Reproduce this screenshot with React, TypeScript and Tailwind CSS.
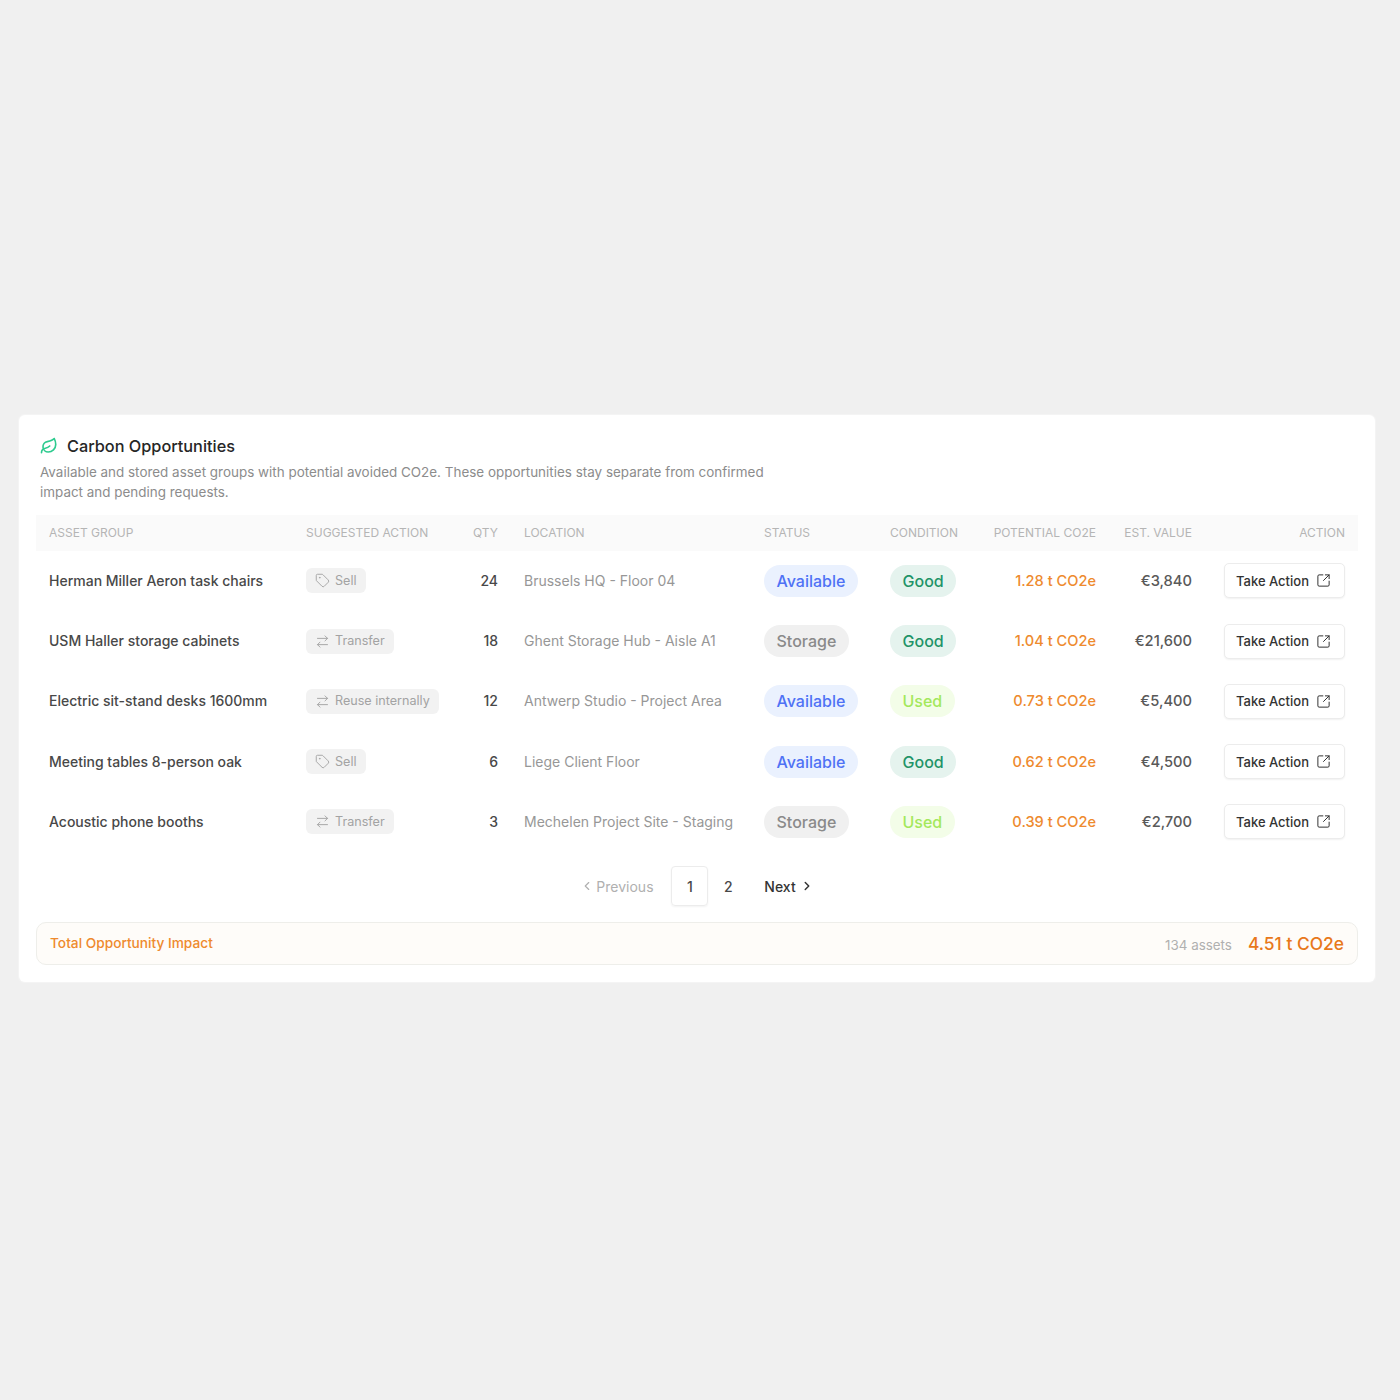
import { ArrowRightLeft, ChevronLeft, ChevronRight, Leaf, SquareArrowOutUpRight, Tag } from "lucide-react";

type Row = {
  name: string;
  action: "Sell" | "Transfer" | "Reuse internally";
  qty: number;
  location: string;
  status: "Available" | "Storage";
  condition: "Good" | "Used";
  co2: string;
  value: string;
};

const rows: Row[] = [
  { name: "Herman Miller Aeron task chairs", action: "Sell", qty: 24, location: "Brussels HQ - Floor 04", status: "Available", condition: "Good", co2: "1.28 t CO2e", value: "€3,840" },
  { name: "USM Haller storage cabinets", action: "Transfer", qty: 18, location: "Ghent Storage Hub - Aisle A1", status: "Storage", condition: "Good", co2: "1.04 t CO2e", value: "€21,600" },
  { name: "Electric sit-stand desks 1600mm", action: "Reuse internally", qty: 12, location: "Antwerp Studio - Project Area", status: "Available", condition: "Used", co2: "0.73 t CO2e", value: "€5,400" },
  { name: "Meeting tables 8-person oak", action: "Sell", qty: 6, location: "Liege Client Floor", status: "Available", condition: "Good", co2: "0.62 t CO2e", value: "€4,500" },
  { name: "Acoustic phone booths", action: "Transfer", qty: 3, location: "Mechelen Project Site - Staging", status: "Storage", condition: "Used", co2: "0.39 t CO2e", value: "€2,700" },
];

const statusStyle = {
  Available: "bg-[#eaf1fe] text-[#4f72f5]",
  Storage: "bg-[#f0f0f0] text-[#8a8a8a]",
};

const conditionStyle = {
  Good: "bg-[#e5f3ee] text-[#1f9468]",
  Used: "bg-[#f3fde8] text-[#a3e85c]",
};

const gridCols = "grid grid-cols-[257px_156px_36px_266px_126px_90px_116px_96px_153px] items-center px-[13px]";

export default function App() {
  return (
    <div className="h-[1400px] bg-[#f0f0f0] pt-[415px] pl-[19px] pr-[25px] font-['Inter',sans-serif]">
      <div className="h-[567px] rounded-[6px] bg-white px-[17px] pt-[19px] shadow-[0_0_0_1px_#f4f4f4]">
        <div className="flex h-[24px] items-center gap-[9px] pl-[4px]">
          <Leaf className="h-[18px] w-[18px] text-[#2ecb8f]" strokeWidth={2.2} />
          <h2 className="text-[16.3px] font-medium text-[#262626]">Carbon Opportunities</h2>
        </div>
        <p className="mt-[4px] w-[740px] pl-[4px] text-[13.45px] leading-[20px] text-[#8c8c8c]">
          Available and stored asset groups with potential avoided CO2e. These opportunities stay separate from confirmed impact and pending requests.
        </p>

        <div className={`${gridCols} mt-[13px] h-[35.6px] bg-[#fafafa] text-[12px] uppercase text-[#b5b5b5]`}>
          <div>Asset Group</div>
          <div>Suggested Action</div>
          <div className="text-right">Qty</div>
          <div className="pl-[26px]">Location</div>
          <div>Status</div>
          <div>Condition</div>
          <div className="text-right">Potential CO2e</div>
          <div className="text-right">Est. Value</div>
          <div className="text-right">Action</div>
        </div>

        {rows.map((row) => (
          <div key={row.name} className={`${gridCols} h-[60.3px]`}>
            <div className="text-[14px] leading-[20px] font-medium whitespace-nowrap text-[#484848]">{row.name}</div>
            <div className="flex">
              <span className="flex h-[25px] items-center gap-[5px] rounded-[6px] bg-[#f2f2f2] px-[9px] text-[12.6px] leading-[20px] text-[#a3a3a3]">
                {row.action === "Sell" ? (
                  <Tag className="h-[15px] w-[15px]" strokeWidth={1.5} />
                ) : (
                  <ArrowRightLeft className="h-[15px] w-[15px]" strokeWidth={1.5} />
                )}
                {row.action}
              </span>
            </div>
            <div className="text-right text-[14px] leading-[20px] font-medium text-[#484848]">{row.qty}</div>
            <div className="pl-[26px] text-[14px] leading-[20px] whitespace-nowrap text-[#979797]">{row.location}</div>
            <div className="flex">
              <span className={`flex h-[32px] items-center rounded-full px-[12.5px] text-[16px] font-medium ${statusStyle[row.status]}`}>
                {row.status}
              </span>
            </div>
            <div className="flex">
              <span className={`flex h-[32px] items-center rounded-full px-[12.5px] text-[16px] font-medium ${conditionStyle[row.condition]}`}>
                {row.condition}
              </span>
            </div>
            <div className="text-right text-[14.6px] leading-[20px] font-medium text-[#ee8a2e]">{row.co2}</div>
            <div className="text-right text-[14.7px] leading-[20px] font-medium text-[#595959]">{row.value}</div>
            <div className="flex justify-end">
              <button className="flex h-[35px] w-[121px] items-center justify-center gap-[7px] rounded-[5px] border border-[#ececec] bg-white pr-[2px] text-[13px] leading-[20px] font-medium text-[#333333] shadow-[0_1px_2px_rgba(0,0,0,0.06)]">
                Take Action
                <SquareArrowOutUpRight className="h-[15px] w-[15px]" strokeWidth={1.6} />
              </button>
            </div>
          </div>
        ))}

        <div className="mt-[14px] flex h-[40px] items-center justify-center text-[14px]">
          <div className="flex w-[91px] items-center gap-[2px] text-[#b0b0b0]">
            <ChevronLeft className="h-[14px] w-[14px]" strokeWidth={2} />
            Previous
          </div>
          <div className="flex h-[40px] w-[37px] items-center justify-center rounded-[4px] border border-[#ececec] font-medium text-[#484848] shadow-[0_1px_2px_rgba(0,0,0,0.05)]">1</div>
          <div className="flex w-[40px] items-center justify-center font-medium text-[#484848]">2</div>
          <div className="ml-[16px] flex items-center gap-[4px] font-medium text-[#333333]">
            Next
            <ChevronRight className="h-[14px] w-[14px]" strokeWidth={2.5} />
          </div>
        </div>

        <div className="mt-[16px] flex h-[43px] items-center justify-between rounded-[10px] border border-[#eeeeea] bg-[#fefcf9] px-[13px]">
          <span className="text-[13.7px] font-medium text-[#ee8a2e]">Total Opportunity Impact</span>
          <div className="flex items-center gap-[16px]">
            <span className="translate-y-px text-[13.4px] text-[#b0b0b0]">134 assets</span>
            <span className="text-[17.4px] font-medium text-[#e8781a]">4.51 t CO2e</span>
          </div>
        </div>
      </div>
    </div>
  );
}
